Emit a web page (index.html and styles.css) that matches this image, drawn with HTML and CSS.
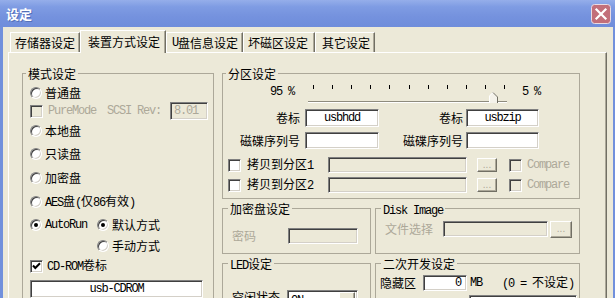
FILE: index.html
```html
<!DOCTYPE html>
<html lang="zh-CN">
<head>
<meta charset="utf-8">
<title>设定</title>
<link rel="stylesheet" href="styles.css">
</head>
<body>
<div class="window">
  <div class="titlebar">
    <span class="title">设定</span>
    <span class="close"><svg width="20" height="20" viewBox="0 0 20 20"><rect x="0.5" y="0.5" width="19" height="19" rx="3" fill="#c26f7a" stroke="#e9dbe3"/><path d="M5.5 5.5L14.5 14.5M14.5 5.5L5.5 14.5" stroke="#fff" stroke-width="2.2" stroke-linecap="square"/></svg></span>
  </div>
  <div class="client">
    <div class="tabs">
      <div class="tab">存储器设定</div>
      <div class="tab cur">装置方式设定</div>
      <div class="tab t3"><span class="m">U</span>盘信息设定</div>
      <div class="tab t4">坏磁区设定</div>
      <div class="tab t5">其它设定</div>
    </div>
    <div class="panel">
      <fieldset class="mode">
        <legend>模式设定</legend>
        <div class="gbody">
          <div class="row h18"><span class="rd"></span><span>普通盘</span></div>
          <div class="row h18"><span class="cb off"></span><span class="m dis">PureMode</span><span class="m dis scsi">SCSI Rev:</span><span class="tb off rev"><span class="m dis">8.01</span></span></div>
          <div class="row h22"><span class="rd"></span><span>本地盘</span></div>
          <div class="row h24"><span class="rd"></span><span>只读盘</span></div>
          <div class="row h24"><span class="rd"></span><span>加密盘</span></div>
          <div class="row h24"><span class="rd"></span><span><span class="m">AES</span>盘<span class="m">(</span>仅<span class="m">86</span>有效<span class="m">)</span></span></div>
          <div class="row h22"><span class="rd on"></span><span class="m">AutoRun</span><span class="rd on ar"></span><span>默认方式</span></div>
          <div class="row h20 ind"><span class="rd"></span><span>手动方式</span></div>
          <div class="row h20"><span class="cb cdcb"><svg width="11" height="11" viewBox="0 0 11 11"><path d="M2 4.5L4.3 7L9 2.2" fill="none" stroke="#000" stroke-width="2"/></svg></span><span><span class="m">CD-ROM</span>卷标</span></div>
          <div class="tb cdrom"><span class="m">usb-CDROM</span></div>
        </div>
      </fieldset>

      <div class="rcol">
        <fieldset class="part">
          <legend>分区设定</legend>
          <div class="pbody">
            <div class="slider">
              <span class="m pct">95 %</span>
              <svg width="207" height="23" viewBox="0 0 207 23">
                <g fill="#000">
                  <rect x="8" y="2" width="1" height="4"/>
                  <rect x="27" y="2" width="1" height="4"/>
                  <rect x="46" y="2" width="1" height="4"/>
                  <rect x="65" y="2" width="1" height="4"/>
                  <rect x="84" y="2" width="1" height="4"/>
                  <rect x="104" y="2" width="1" height="4"/>
                  <rect x="123" y="2" width="1" height="4"/>
                  <rect x="142" y="2" width="1" height="4"/>
                  <rect x="161" y="2" width="1" height="4"/>
                  <rect x="180" y="2" width="1" height="4"/>
                  <rect x="199" y="2" width="1" height="4"/>
                </g>
                <rect x="3" y="18" width="199" height="1" fill="#8e8b7e"/>
                <rect x="3" y="19" width="199" height="1" fill="#fff"/>
                <polygon points="184,20 184,13 188,9 192,13 192,20" fill="#f4f2ea"/>
                <polyline points="184.5,20 184.5,13 188,9.5" fill="none" stroke="#fff"/>
                <polyline points="188,9.5 192.5,14 192.5,20" fill="none" stroke="#716f64"/>
              </svg>
              <span class="m pr">5 %</span>
            </div>
            <div class="lgrid">
              <span class="lbl">卷标</span>
              <span class="tb"><span class="m">usbhdd</span></span>
              <span class="lbl r">卷标</span>
              <span class="tb"><span class="m">usbzip</span></span>
              <span class="lbl">磁碟序列号</span>
              <span class="tb"></span>
              <span class="lbl r">磁碟序列号</span>
              <span class="tb"></span>
            </div>
            <div class="crows">
              <div class="crow"><span class="cb"></span><span class="clbl">拷贝到分区<span class="m">1</span></span><span class="tb off cin"></span><span class="btn cbtn">...</span><span class="cb off ccb"></span><span class="m dis">Compare</span></div>
              <div class="crow"><span class="cb"></span><span class="clbl">拷贝到分区<span class="m">2</span></span><span class="tb off cin"></span><span class="btn cbtn">...</span><span class="cb off ccb"></span><span class="m dis">Compare</span></div>
            </div>
          </div>
        </fieldset>

        <div class="pair">
          <fieldset class="enc">
            <legend class="lw">加密盘设定</legend>
            <div class="ebody"><span class="dis">密码</span><span class="tb off pw"></span></div>
          </fieldset>
          <fieldset class="disk">
            <legend class="lw"><span class="m">Disk Image</span></legend>
            <div class="dbody"><span class="dis">文件选择</span><span class="tb off fin"></span><span class="btn dbtn">...</span></div>
          </fieldset>
        </div>

        <div class="pair">
          <fieldset class="led">
            <legend class="lw"><span class="m">LED</span>设定</legend>
            <div class="lbody"><span class="lab">空闲状态</span><span class="tb dd"><span class="m">ON</span><span class="btn ddb"><svg width="7" height="4" viewBox="0 0 7 4"><path d="M0 0H7L3.5 4Z" fill="#000"/></svg></span></span></div>
          </fieldset>
          <fieldset class="dev">
            <legend class="lw">二次开发设定</legend>
            <div class="vbody">
              <div class="vrow"><span>隐藏区</span><span class="tb hin"><span class="m">0</span></span><span class="m mb">MB</span><span class="note"><span class="m">(0 = </span>不设定<span class="m">)</span></span></div>
              <div class="tb hin2"></div>
            </div>
          </fieldset>
        </div>
      </div>
    </div>
  </div>
</div>
</body>
</html>
```

FILE: styles.css
```css
* { box-sizing: border-box; }
html, body { margin: 0; padding: 0; }
body {
  width: 615px; height: 298px; overflow: hidden;
  background: #ece9d8;
  font-family: "Noto Sans CJK SC", "Liberation Sans", sans-serif;
  font-size: 12px; line-height: 14px; color: #000;
}
.m {
  font-family: "Liberation Mono", "DejaVu Sans Mono", monospace;
  font-size: 12px; letter-spacing: -1.2px;
}
.dis { color: #aca899; }

.window {
  width: 615px; height: 298px;
  display: flex; flex-direction: column;
  background: #7190dc;
}
.titlebar {
  height: 27px; flex: none;
  display: flex; align-items: center; justify-content: space-between;
  padding: 0 4px 0 6px;
  background: linear-gradient(#95aeea 0, #7f9ce3 25%, #7592de 60%, #6f8ddb 100%);
}
.title {
  color: #fff; font-size: 13px; line-height: 16px; font-weight: 700;
  text-shadow: 1px 1px 0 #5470b8;
}
.close { display: block; width: 20px; height: 20px; }
.close svg { display: block; }

.client {
  flex: 1; min-height: 0;
  margin: 0 2px 0 3px;
  background: #ece9d8;
  padding-top: 3px;
  display: flex; flex-direction: column;
}

.tabs {
  height: 22px; flex: none;
  display: flex; align-items: flex-end;
  padding-left: 7px;
  position: relative; z-index: 1;
}
.tab {
  height: 20px;
  display: flex; align-items: center;
  padding: 0 4px;
  border-top: 1px solid #fff;
  border-left: 1px solid #fff;
  border-right: 1px solid #716f64;
  box-shadow: inset -1px 0 0 #aca899;
  white-space: nowrap;
}
.tab.cur {
  height: 23px; margin-bottom: -1px;
  padding: 0 5px 1px 7px;
  background: #ece9d8;
}
.tab.t3 { padding: 0 4px 0 5px; }
.tab.t4 { padding: 0 6px 0 4px; }
.tab.t5 { padding: 0 4px 0 6px; }

.panel {
  flex: 1; min-height: 0;
  margin: 0 6px 0 5px;
  border-top: 1px solid #fff;
  border-left: 1px solid #fff;
  border-right: 1px solid #716f64;
  box-shadow: inset -1px 0 0 #aca899;
  display: flex; align-items: flex-start; gap: 8px;
  padding: 13px 26px 0 13px;
}

fieldset {
  margin: 0; padding: 0; min-width: 0;
  border: 1px solid #aca899;
}
legend {
  padding: 0 2px; margin-left: 3px;
  line-height: 15px; height: 15px;
  white-space: nowrap;
}
legend.lw { margin-left: 5px; }

.mode { width: 192px; height: 240px; flex: none; }
.gbody { padding: 3px 0 0 7px; }
.row { display: flex; align-items: center; white-space: nowrap; }
.h18 { height: 18px; }
.h20 { height: 20px; }
.h22 { height: 22px; }
.h24 { height: 24px; }
.ind { padding-left: 67px; }

.rd {
  flex: none; position: relative;
  width: 12px; height: 12px; margin-right: 3px;
  border-radius: 50%; background: #fff;
  border: 1px solid; border-color: #808080 #fff #fff #808080;
  box-shadow: inset 1px 1px 0 #404040, inset -1px -1px 0 #d4d0c8;
}
.rd.on::after {
  content: ""; position: absolute; left: 3px; top: 3px;
  width: 4px; height: 4px; border-radius: 50%; background: #000;
}
.rd.ar { margin-left: 10px; }

.cb {
  flex: none; position: relative;
  width: 13px; height: 13px; margin-right: 5px;
  background: #fff;
  border: 1px solid; border-color: #808080 #fff #fff #808080;
  box-shadow: inset 1px 1px 0 #404040, inset -1px -1px 0 #d4d0c8;
}
.cb.off { background: #ece9d8; }
.cb svg { display: block; }
.cdcb { margin-right: 4px; }

.scsi { margin-left: 11px; }

.tb {
  display: flex; align-items: center; justify-content: center;
  background: #fff;
  border: 1px solid; border-color: #808080 #fff #fff #808080;
  box-shadow: inset 1px 1px 0 #404040, inset -1px -1px 0 #d4d0c8;
  white-space: nowrap; overflow: hidden;
}
.tb.off { background: #ece9d8; }
.rev { margin-left: 9px; width: 38px; height: 18px; justify-content: flex-start; padding-left: 3px; }
.cdrom { margin-top: 4px; width: 173px; height: 18px; }

.rcol { width: 358px; flex: none; display: flex; flex-direction: column; }
.part { height: 133px; }
.pbody { padding-top: 2px; }
.slider { display: flex; align-items: flex-start; height: 23px; padding-left: 47px; }
.slider .m { line-height: 18px; }
.slider svg { margin-left: 11px; flex: none; display: block; }
.slider .pr { margin-left: 10px; }

.lgrid {
  display: grid;
  grid-template-columns: 82px 74px 87px 73px;
  grid-template-rows: 18px 17px;
  row-gap: 5px;
  margin-top: 3px;
}
.lbl { display: flex; align-items: center; justify-content: flex-end; padding-right: 5px; white-space: nowrap; }
.lbl.r { padding-right: 3px; }

.crows { margin-top: 8px; display: flex; flex-direction: column; gap: 4px; }
.crow { display: flex; align-items: center; height: 16px; padding-left: 5px; white-space: nowrap; }
.crow .cb { margin-right: 6px; }
.crow .ccb { margin-left: 12px; margin-right: 5px; }
.clbl { width: 81px; flex: none; }
.cin { width: 139px; height: 16px; flex: none; }

.btn {
  flex: none;
  display: flex; align-items: center; justify-content: center;
  background: #ece9d8;
  border: 1px solid; border-color: #fff #716f64 #716f64 #fff;
  box-shadow: inset -1px -1px 0 #aca899;
  color: #aca899; font-size: 10px; line-height: 10px;
  font-family: "Liberation Sans", sans-serif;
}
.cbtn { margin-left: 10px; width: 20px; height: 14px; }

.pair { display: flex; gap: 4px; margin-top: 2px; }
.enc { width: 149px; height: 53px; flex: none; }
.disk { width: 205px; height: 53px; flex: none; }
.led { width: 149px; height: 60px; flex: none; }
.dev { width: 205px; height: 60px; flex: none; }

.ebody { display: flex; align-items: center; padding: 12px 0 0 9px; }
.pw { margin-left: 32px; width: 70px; height: 16px; }

.dbody { display: flex; align-items: center; height: 22px; padding: 4px 0 0 9px; }
.fin { margin-left: 10px; width: 105px; height: 16px; }
.dbtn { margin-left: 2px; width: 22px; height: 17px; }

.lbody { display: flex; align-items: flex-start; padding: 19px 0 0 9px; }
.lab { margin-top: 0; }
.dd { margin-left: 7px; width: 71px; height: 21px; justify-content: space-between; padding: 0 2px 0 3px; }
.ddb { width: 16px; height: 17px; }

.vbody { padding: 4px 0 0 4px; }
.vrow { display: flex; align-items: center; height: 16px; white-space: nowrap; }
.hin { margin-left: 7px; width: 44px; height: 16px; justify-content: flex-end; padding-right: 5px; }
.mb { margin-left: 3px; }
.note { margin-left: 20px; }
.hin2 { margin: 4px 0 0 89px; width: 108px; height: 18px; }
```
